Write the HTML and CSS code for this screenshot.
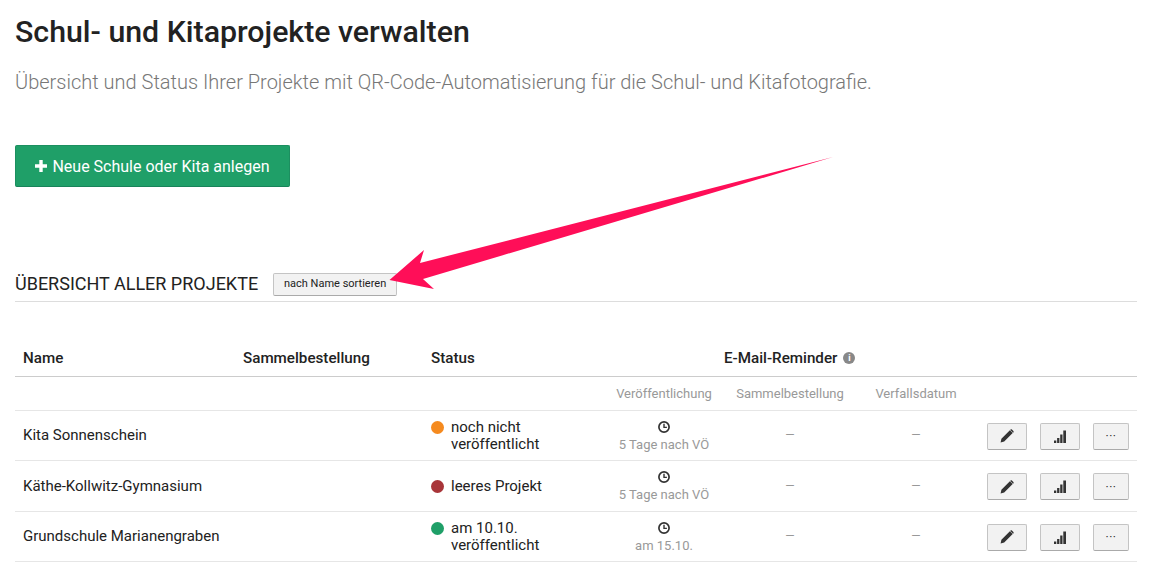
FILE: index.html
```html
<!DOCTYPE html>
<html lang="de">
<head>
<meta charset="utf-8">
<title>Schul- und Kitaprojekte verwalten</title>
<link rel="stylesheet" href="styles.css">
</head>
<body>
<svg width="0" height="0" class="defs">
  <defs>
    <symbol id="clock" viewBox="0 0 12 12"><circle cx="6" cy="6" r="5.1" fill="none" stroke="currentColor" stroke-width="1.7"/><path d="M6 2.8V6.4H8.9" fill="none" stroke="currentColor" stroke-width="1.4"/></symbol>
    <symbol id="pencil" viewBox="0 0 14 14"><path d="M0.6 13.4L1.4 9.8L9.9 1.3L12.7 4.1L4.2 12.6Z M10.6 0.6C11 0.2 11.5 0.2 11.9 0.6L13.4 2.1C13.8 2.5 13.8 3 13.4 3.4L13.1 3.7L10.3 0.9Z" fill="currentColor"/></symbol>
    <symbol id="bars" viewBox="0 0 12 13"><path d="M0 10.5h2.3V13H0zM3.1 8h2.3v5H3.1zM6.2 4.5h2.3V13H6.2zM9.3 0.5H12V13H9.3z" fill="currentColor"/></symbol>
    <symbol id="plus" viewBox="0 0 12 12"><path d="M4.3 0H7.7V4.3H12V7.7H7.7V12H4.3V7.7H0V4.3H4.3Z" fill="currentColor"/></symbol>
  </defs>
</svg>
<main class="page">
  <h1 class="title">Schul- und Kitaprojekte verwalten</h1>
  <p class="lead">Übersicht und Status Ihrer Projekte mit QR-Code-Automatisierung für die Schul- und Kitafotografie.</p>
  <button class="btn-primary" type="button"><svg class="ic-plus"><use href="#plus"/></svg>Neue Schule oder Kita anlegen</button>
  <div class="section-head">
    <h2 class="section-title">ÜBERSICHT ALLER PROJEKTE</h2>
    <button class="btn-sort" type="button">nach Name sortieren</button>
  </div>
  <table class="projects">
    <colgroup>
      <col class="c-name"><col class="c-coll"><col class="c-status"><col class="c-pub"><col class="c-rem"><col class="c-exp"><col class="c-act">
    </colgroup>
    <thead>
      <tr class="head-main">
        <th>Name</th><th>Sammelbestellung</th><th>Status</th>
        <th colspan="4" class="th-mail"><span class="mail-label">E-Mail-Reminder <span class="info">i</span></span></th>
      </tr>
      <tr class="head-sub">
        <th></th><th></th><th></th><th>Veröffentlichung</th><th>Sammelbestellung</th><th>Verfallsdatum</th><th></th>
      </tr>
    </thead>
    <tbody>
      <tr>
        <td class="name">Kita Sonnenschein</td><td></td>
        <td><div class="status"><span class="dot orange"></span><span>noch nicht<br>veröffentlicht</span></div></td>
        <td class="center cell-info"><svg class="ic-clock"><use href="#clock"/></svg><div class="sub">5 Tage nach VÖ</div></td>
        <td class="center dash">—</td><td class="center dash">—</td>
        <td><div class="actions"><button class="btn-act wide" type="button"><svg class="ic-pen"><use href="#pencil"/></svg></button><button class="btn-act wide" type="button"><svg class="ic-bars"><use href="#bars"/></svg></button><button class="btn-act more" type="button">···</button></div></td>
      </tr>
      <tr class="row-tall">
        <td class="name">Käthe-Kollwitz-Gymnasium</td><td></td>
        <td><div class="status"><span class="dot red"></span><span>leeres Projekt</span></div></td>
        <td class="center cell-info"><svg class="ic-clock"><use href="#clock"/></svg><div class="sub">5 Tage nach VÖ</div></td>
        <td class="center dash">—</td><td class="center dash">—</td>
        <td><div class="actions"><button class="btn-act wide" type="button"><svg class="ic-pen"><use href="#pencil"/></svg></button><button class="btn-act wide" type="button"><svg class="ic-bars"><use href="#bars"/></svg></button><button class="btn-act more" type="button">···</button></div></td>
      </tr>
      <tr>
        <td class="name">Grundschule Marianengraben</td><td></td>
        <td><div class="status"><span class="dot green"></span><span>am 10.10.<br>veröffentlicht</span></div></td>
        <td class="center cell-info"><svg class="ic-clock"><use href="#clock"/></svg><div class="sub">am 15.10.</div></td>
        <td class="center dash">—</td><td class="center dash">—</td>
        <td><div class="actions"><button class="btn-act wide" type="button"><svg class="ic-pen"><use href="#pencil"/></svg></button><button class="btn-act wide" type="button"><svg class="ic-bars"><use href="#bars"/></svg></button><button class="btn-act more" type="button">···</button></div></td>
      </tr>
    </tbody>
  </table>
  <svg class="arrow" width="1159" height="566" viewBox="0 0 1159 566" aria-hidden="true">
    <path d="M833 157L420 263L424 250L389.5 280L434 289L423 279Z" fill="#ff0e58"/>
  </svg>
</main>
</body>
</html>
```
FILE: styles.css
```css
html, body { margin: 0; padding: 0; background: #fff; overflow: hidden; }
body { font-family: Roboto, "Liberation Sans", sans-serif; color: #222; }
.defs { position: absolute; }
.page { padding: 0 22px 0 15px; height: 566px; box-sizing: border-box; }
.title { margin: 0; padding-top: 14px; font-size: 30.3px; line-height: 36px; font-weight: 500; color: #222; }
.lead { margin: 18px 0 0; font-size: 20px; line-height: 28px; font-weight: 300; color: #777; }
.btn-primary { display: flex; align-items: center; justify-content: center; gap: 5px; margin: 49px 0 0; width: 275px; height: 42px; padding: 0; border: 1px solid #1c8f60; border-bottom-color: #18835a; border-radius: 2px; background: #1f9f68; color: #fff; font: 400 16px Roboto, sans-serif; }
.ic-plus { width: 12px; height: 12px; }
.section-head { display: flex; align-items: center; margin-top: 85px; padding-bottom: 5px; border-bottom: 1px solid #ddd; height: 24px; }
.section-title { margin: 0; font-size: 18px; line-height: 24px; font-weight: 400; color: #222; }
.btn-sort { margin-left: 15px; width: 124px; height: 23px; padding: 0 0 1px; border: 1px solid #c4c4c4; border-bottom-color: #aaa; border-radius: 2px; background: #f2f2f2; color: #222; font: 400 11px Roboto, sans-serif; }
.projects { margin-top: 36px; width: 1122px; table-layout: fixed; border-collapse: collapse; }
.c-name { width: 220px; } .c-coll { width: 188px; } .c-status { width: 181px; } .c-pub { width: 120px; } .c-rem { width: 132px; } .c-exp { width: 120px; } .c-act { width: 161px; }
th { font-weight: 500; text-align: left; padding: 0 8px; }
.head-main th { height: 38px; padding-top: 3px; box-sizing: border-box; font-size: 15.2px; color: #222; border-bottom: 1px solid #ccc; }
.head-sub th { height: 33px; padding: 0; text-align: center; font-size: 13px; font-weight: 400; color: #999; border-bottom: 1px solid #e6e6e6; }
.head-main .th-mail { padding-left: 120px; }
.mail-label { display: inline-flex; align-items: center; gap: 3px; }
.info { display: inline-block; width: 12px; height: 12px; margin-left: 3px; border-radius: 50%; background: #888; color: #fff; font-size: 9px; line-height: 12px; text-align: center; font-weight: 700; }
td { padding: 0 8px; height: 50px; font-size: 15px; color: #222; border-bottom: 1px solid #e6e6e6; box-sizing: border-box; }
.row-tall td { height: 51px; }
.name { font-size: 15px; }
.status { display: flex; align-items: flex-start; gap: 7px; margin-top: 2px; line-height: 17px; }
.dot { flex: none; width: 13px; height: 13px; margin-top: 2px; border-radius: 50%; }
.orange { background: #f58a1f; } .red { background: #a83539; } .green { background: #1f9f68; }
.center { text-align: center; padding: 0; }
.cell-info { padding-top: 3px; }
.ic-clock { display: block; width: 12px; height: 12px; margin: 0 auto 4px; color: #333; }
.sub { font-size: 13px; line-height: 16px; color: #999; }
.dash { color: #999; font-size: 12px; }
.actions { display: flex; justify-content: flex-end; gap: 13px; margin-top: 2px; }
.btn-act { display: flex; align-items: center; justify-content: center; height: 27px; padding: 0; border: 1px solid #c4c4c4; border-bottom-color: #aaa; border-radius: 2px; background: #f2f2f2; color: #333; font: 400 12px Roboto, sans-serif; letter-spacing: 0.5px; }
.wide { width: 40px; }
.more { width: 36px; }
.ic-pen { width: 14px; height: 14px; }
.ic-bars { width: 12px; height: 13px; }
.arrow { position: absolute; left: 0; top: 0; pointer-events: none; }
```
